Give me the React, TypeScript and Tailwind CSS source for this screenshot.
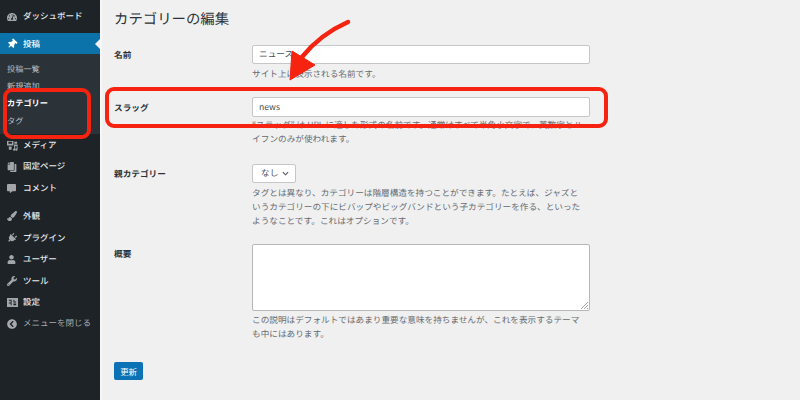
import {
  FaTachometerAlt,
  FaThumbtack,
  FaCopy,
  FaCommentAlt,
  FaPaintBrush,
  FaPlug,
  FaUser,
  FaWrench,
  FaChevronCircleLeft,
} from 'react-icons/fa'

const font = "font-['Noto_Sans_CJK_JP','Noto_Sans',sans-serif]"

function SettingsIcon() {
  return (
    <svg viewBox="0 0 12 12" className="w-[11px] h-[11px]">
      <path fill="currentColor" fillRule="evenodd" d="M0 1h12v10H0z M2 3v1h2v2H2v1h2v2h1V3z M7 3v3h3V5H8V3z M7 7v2h3V7z" />
    </svg>
  )
}

function MediaIcon() {
  return (
    <svg viewBox="0 0 12 12" className="w-[11px] h-[11px]">
      <path fill="currentColor" fillRule="evenodd" d="M0 1h7v5H0z M1.500 2v2h4V2z" />
      <path fill="currentColor" d="M8 2h3v2H8z M7.500 5h4v5.500a1.200 1.200 0 1 1-1-1.200V6.500H9v4a1.200 1.200 0 1 1-1-1.200z M2 7h3v3.500H2z" />
    </svg>
  )
}

function MenuItem({ icon, label, active }: { icon: React.ReactNode; label: string; active?: boolean }) {
  return (
    <div className={`relative flex items-center h-[21.5px] pl-[7px] pt-[2px] ${active ? 'bg-[#0b72aa] text-white' : 'text-[#e6e7e8]'}`}>
      <span className={`w-[16px] flex items-center ${active ? 'text-white' : 'text-[#a3a6a9]'}`}>{icon}</span>
      <span className="text-[8.5px] font-medium">{label}</span>
      {active && (
        <span className="absolute right-0 top-[6px] border-y-[5px] border-y-transparent border-r-[5px] border-r-[#f0f0f0]" />
      )}
    </div>
  )
}

function SubItem({ label, current }: { label: string; current?: boolean }) {
  return (
    <div className={`h-[17.4px] flex items-center pl-[7px] pt-[2px] text-[8.2px] ${current ? 'text-white font-bold' : 'text-[#b9bcbf]'}`}>
      {label}
    </div>
  )
}

function Row({ label, className, children }: { label: string; className: string; children: React.ReactNode }) {
  return (
    <div className={`flex ${className}`}>
      <div className="w-[138px] shrink-0 text-[8.65px] font-bold text-[#2c3338]">{label}</div>
      <div className="w-[338px]">{children}</div>
    </div>
  )
}

function Hint({ className, children }: { className: string; children: React.ReactNode }) {
  return <p className={`text-[8.65px] leading-[14.2px] text-[#666b70] w-[332px] ${className}`}>{children}</p>
}

const inputBox = 'h-[19px] bg-white border border-[#c4c6c8] rounded-[2px] flex items-center px-[6px] text-[8.65px] text-[#4a4f54]'

export default function App() {
  return (
    <div className={`relative w-[800px] h-[400px] overflow-hidden flex bg-[#f0f0f0] [text-rendering:geometricPrecision] ${font}`}>
      <aside className="w-[100px] shrink-0 bg-[#1d2327] pt-[5px]">
        <MenuItem icon={<FaTachometerAlt size={10} />} label="ダッシュボード" />
        <div className="h-[6px]" />
        <MenuItem icon={<FaThumbtack size={10} className="rotate-45" />} label="投稿" active />
        <div className="bg-[#2c3338] py-[5px]">
          <SubItem label="投稿一覧" />
          <SubItem label="新規追加" />
          <SubItem label="カテゴリー" current />
          <SubItem label="タグ" />
        </div>
        <MenuItem icon={<MediaIcon />} label="メディア" />
        <MenuItem icon={<FaCopy size={10} className="-scale-x-100" />} label="固定ページ" />
        <MenuItem icon={<FaCommentAlt size={9} />} label="コメント" />
        <div className="h-[6.6px]" />
        <MenuItem icon={<FaPaintBrush size={10} />} label="外観" />
        <MenuItem icon={<FaPlug size={10} className="rotate-45" />} label="プラグイン" />
        <MenuItem icon={<FaUser size={9} />} label="ユーザー" />
        <MenuItem icon={<FaWrench size={10} />} label="ツール" />
        <MenuItem icon={<SettingsIcon />} label="設定" />
        <div className="flex items-center h-[21px] pl-[7px] pt-[2px] text-[#a7aaad]">
          <span className="w-[16px] flex items-center"><FaChevronCircleLeft size={10} /></span>
          <span className="text-[8.5px]">メニューを閉じる</span>
        </div>
      </aside>

      <main className="flex-1 border-l-2 border-[#f7f7f7] pl-[12px] pt-[8px]">
        <h1 className="text-[14.4px] leading-[22px] text-[#2c3338] mb-[15px]">カテゴリーの編集</h1>

        <Row label="名前" className="h-[52px] [&>div:first-child]:leading-[21px]">
          <div className={inputBox}>ニュース</div>
          <Hint className="mt-[3px]">サイト上に表示される名前です。</Hint>
        </Row>

        <Row label="スラッグ" className="h-[67px] items-start [&>div:first-child]:leading-[22px]">
          <div className={`${inputBox} h-[20px]`}>news</div>
          <Hint className="mt-[1px]">“スラッグ” は URL に適した形式の名前です。通常はすべて半角小文字で、英数字とハイフンのみが使われます。</Hint>
        </Row>

        <Row label="親カテゴリー" className="h-[80px] [&>div:first-child]:leading-[21px]">
          <div className={`${inputBox} w-[44px] justify-between`}>
            <span className="pl-[2px]">なし</span>
            <svg viewBox="0 0 8 8" className="w-[7px] h-[7px] text-[#50575e]">
              <path d="M1 2.500l3 3 3-3" fill="none" stroke="currentColor" strokeWidth="1.300" />
            </svg>
          </div>
          <Hint className="mt-[3px]">タグとは異なり、カテゴリーは階層構造を持つことができます。たとえば、ジャズというカテゴリーの下にビバップやビッグバンドという子カテゴリーを作る、といったようなことです。これはオプションです。</Hint>
        </Row>

        <Row label="概要" className="h-[118px] [&>div:first-child]:pt-[4px]">
          <div className="relative h-[67px] bg-white border border-[#b5b7b9] rounded-[2px]">
            <svg viewBox="0 0 8 8" className="absolute right-[1px] bottom-[1px] w-[8px] h-[8px] text-[#8c8f94]">
              <path d="M1 8L8 1M4 8L8 4M7 8L8 7" stroke="currentColor" strokeWidth="0.800" />
            </svg>
          </div>
          <Hint className="mt-[2px]">この説明はデフォルトではあまり重要な意味を持ちませんが、これを表示するテーマも中にはあります。</Hint>
        </Row>

        <button className="w-[29px] h-[18px] bg-[#0b72b5] rounded-[2px] text-white text-[8.4px] flex items-center justify-center">更新</button>
      </main>

      {/* red annotations drawn over the screenshot */}
      <div className="absolute left-[3px] top-[88px] w-[88px] h-[51px] border-[4px] border-[#f5230f] rounded-[9px]" />
      <div className="absolute left-[105px] top-[87px] w-[503px] h-[41px] border-[4px] border-[#f5230f] rounded-[9px]" />
      <svg viewBox="0 0 800 400" className="absolute inset-0 w-[800px] h-[400px] pointer-events-none">
        <path d="M348 22C330 30 314 42 302 57" fill="none" stroke="#f5230f" strokeWidth="4.500" strokeLinecap="round" />
        <path d="M292 51L315 65L290 80Z" fill="#f5230f" stroke="#f5230f" strokeWidth="1" strokeLinejoin="round" />
      </svg>
    </div>
  )
}
